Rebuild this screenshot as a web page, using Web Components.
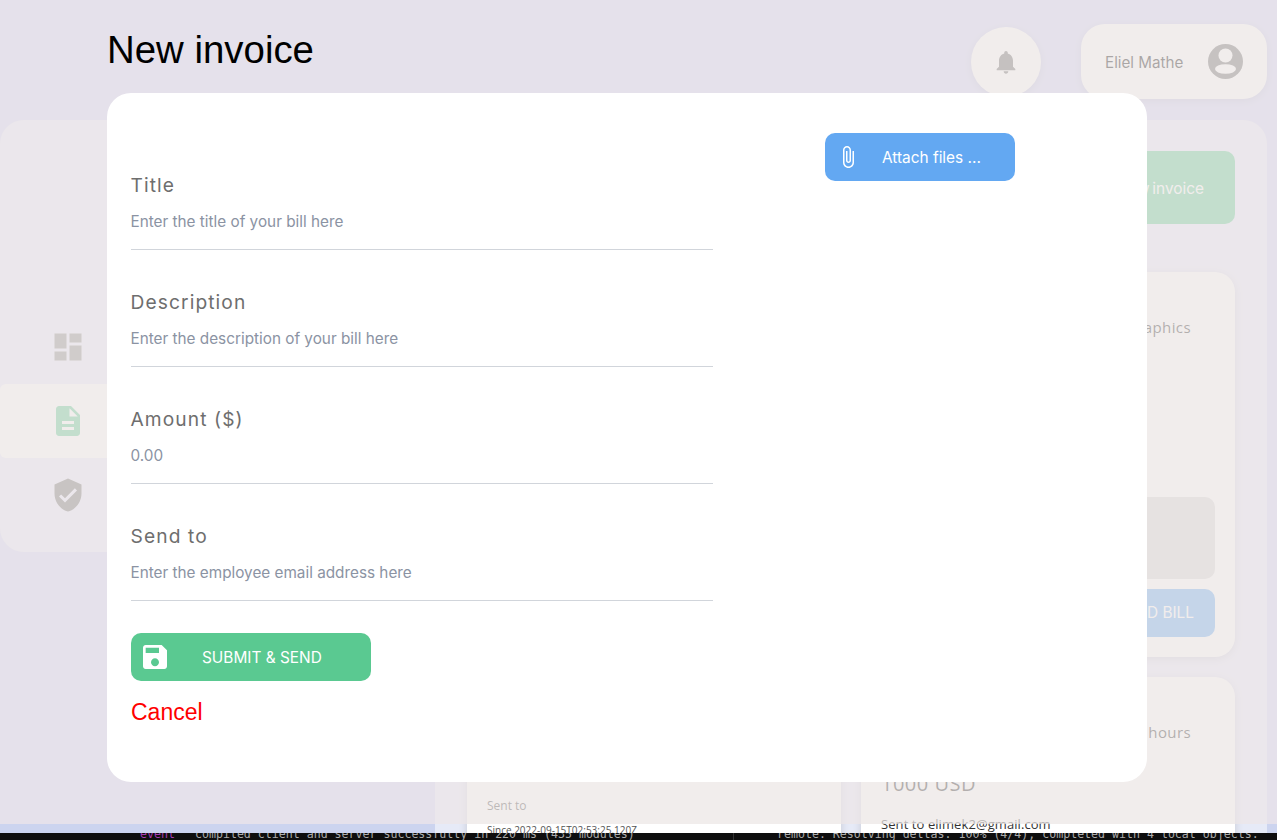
<!DOCTYPE html>
<html><head><meta charset="utf-8"><style>
html,body{margin:0;padding:0;background:#ccd4ef;width:1277px;height:840px;overflow:hidden;font-family:Inter,"Liberation Sans",sans-serif}
</style></head><body>
<app-shell>
  <top-bar slot="top"></top-bar>
  <side-nav slot="side"></side-nav>
  <main-panel slot="main"></main-panel>
  <invoice-dialog slot="dialog"></invoice-dialog>
  <term-strip slot="term"></term-strip>
</app-shell>
<script>
function def(name,html){customElements.define(name,class extends HTMLElement{constructor(){super();this.attachShadow({mode:'open'}).innerHTML=typeof html==='function'?html(this):html;}});}
const icons={
 dash:'M3 13h8V3H3v10zm0 8h8v-6H3v6zm10 0h8V11h-8v10zm0-18v6h8V3h-8z',
 doc:'M14 2H6c-1.1 0-1.99.9-1.99 2L4 20c0 1.1.89 2 1.99 2H18c1.1 0 2-.9 2-2V8l-6-6zm2 16H8v-2h8v2zm0-4H8v-2h8v2zm-3-5V3.5L18.5 9H13z',
 shield:'M12 1L3 5v6c0 5.55 3.84 10.74 9 12 5.16-1.26 9-6.45 9-12V5l-9-4zm-2 16l-4-4 1.41-1.41L10 14.17l6.59-6.59L18 9l-8 8z',
 bell:'M12 22c1.1 0 2-.9 2-2h-4c0 1.1.89 2 2 2zm6-6v-5c0-3.07-1.64-5.64-4.5-6.32V4c0-.83-.67-1.5-1.5-1.5s-1.5.67-1.5 1.5v.68C7.63 5.36 6 7.92 6 11v5l-2 2v1h16v-1l-2-2z',
 save:'M17 3H5c-1.11 0-2 .9-2 2v14c0 1.1.89 2 2 2h14c1.1 0 2-.9 2-2V7l-4-4zm-5 16c-1.66 0-3-1.34-3-3s1.34-3 3-3 3 1.34 3 3-1.34 3-3 3zm3-10H5V5h10v4z',
 clip:'M16.5 6v11.5c0 2.21-1.79 4-4 4s-4-1.79-4-4V5c0-1.38 1.12-2.5 2.5-2.5s2.5 1.12 2.5 2.5v10.5c0 .55-.45 1-1 1s-1-.45-1-1V6H10v9.5c0 1.38 1.12 2.5 2.5 2.5s2.5-1.12 2.5-2.5V5c0-2.21-1.79-4-4-4S7 2.79 7 5v12.5c0 3.04 2.46 5.5 5.5 5.5s5.5-2.46 5.5-5.5V6h-1.5z'
};
const svg=(k,s,c)=>`<svg width="${s}" height="${s}" viewBox="0 0 24 24" fill="${c}" style="display:block;flex:none"><path d="${icons[k]}"/></svg>`;

def('app-shell',`<style>
:host{display:flex;flex-direction:column;width:1277px;height:840px;overflow:hidden;position:relative}
.page{height:833px;position:relative;overflow:hidden;flex:none}
.body{height:824px;display:flex;flex-direction:column;background:#d4d5fa;padding:24px 10px 0 0;box-sizing:border-box}
.cols{display:flex;margin-top:21px;align-items:flex-start;flex:none}
.veil{position:absolute;left:0;top:0;width:1277px;height:824px;background:rgba(235,230,229,.72)}
.over{position:absolute;left:0;top:0;width:1277px;height:824px}
</style>
<div class="page"><div class="body"><slot name="top"></slot><div class="cols"><slot name="side"></slot><slot name="main"></slot></div></div>
<div class="veil"></div><div class="over"><slot name="dialog"></slot></div></div>
<slot name="term"></slot>`);

def('top-bar',`<style>
:host{display:flex;justify-content:flex-end;align-items:center;gap:40px;height:75px;flex:none}
.bell{width:70px;height:70px;border-radius:50%;background:#fff;display:flex;align-items:center;justify-content:center;box-shadow:0 2px 8px rgba(0,0,0,.12)}
.user{width:186px;height:75px;box-sizing:border-box;border-radius:24px;background:#fff;display:flex;align-items:center;justify-content:space-between;padding:0 24px;box-shadow:0 2px 8px rgba(0,0,0,.12);font:15.2px/22px Inter,sans-serif;color:#000}
.user span{padding-top:2px}
</style>
<div class="bell">${svg('bell',28,'#606060')}</div>
<div class="user"><span>Eliel Mathe</span>
<svg width="35" height="35" viewBox="0 0 35 35" style="display:block;flex:none"><circle cx="17.5" cy="17.5" r="17.5" fill="#666"/><circle cx="17.5" cy="11.5" r="7" fill="#fff"/><ellipse cx="17.5" cy="25" rx="10.5" ry="4.8" fill="#fff"/></svg></div>`);

def('nav-item',h=>`<style>
:host{display:block;height:74px}
.r{height:74px;display:flex;align-items:center;padding-left:50px;box-sizing:border-box;${h.hasAttribute('active')?'background:#fff;border-radius:6px 0 0 6px':''}}
</style><div class="r">${svg(h.getAttribute('icon'),36,h.getAttribute('tint'))}</div>`);

def('side-nav',`<style>
:host{display:block;width:435px;flex:none}
.s{width:300px;height:432px;box-sizing:border-box;padding-top:190px;background:rgba(255,255,255,.5);border-radius:24px;overflow:hidden}
</style><div class="s">
<nav-item icon="dash" tint="#888"></nav-item>
<nav-item icon="doc" tint="#5ac991" active></nav-item>
<nav-item icon="shield" tint="#6c6c6c"></nav-item></div>`);

def('bill-card',h=>`<style>
:host{display:block;box-sizing:border-box;background:#fff;border-radius:20px;box-shadow:0 2px 8px rgba(0,0,0,.14);height:385px}
</style><slot></slot>`);

def('main-panel',`<style>
:host{display:block;width:832px;height:720px;box-sizing:border-box;background:rgba(255,255,255,.5);border-radius:24px 24px 0 0;padding:31px 32px 0}
.top{display:flex;justify-content:flex-end}
.new{width:240px;height:73px;border-radius:10px;background:#5ac991;color:#fff;font:15.4px/75px Inter,sans-serif;word-spacing:-1.5px;text-align:right;box-sizing:border-box;padding-right:31px}
.grid{margin-top:48px;display:grid;grid-template-columns:374px 374px;gap:20px}
.c{display:flex;flex-direction:column;padding:0 20px;box-sizing:border-box;height:100%}
.t{font:400 15px/20px "Open Sans",sans-serif;letter-spacing:.4px;color:#222;text-align:right;padding-right:24px;white-space:nowrap}
.box{height:82px;background:#d6d6d8;border-radius:10px}
.up{height:48px;background:#63a8f2;border-radius:10px;margin-top:10px;color:#fff;font:15.4px/48px Inter,sans-serif;text-align:right;padding-right:21px}
.sm{font:12px/16px "Open Sans",sans-serif;color:#444}
.sm2{font:10px/14px "Open Sans",sans-serif;color:#555;white-space:nowrap}
.sm3{font:13px/16px "Open Sans",sans-serif;color:#333;letter-spacing:.08px;white-space:nowrap}
.amt{font:20px/24px "Open Sans",sans-serif;color:#222;letter-spacing:.5px}
</style>
<div class="top"><div class="new">New invoice</div></div>
<div class="grid">
<bill-card><div class="c"><div class="t" style="margin-top:45px">Invoice for logo graphics</div><div style="flex:1"></div><div class="box"></div><div class="up" style="margin-bottom:20px">UPLOAD BILL</div></div></bill-card>
<bill-card><div class="c"><div class="t" style="margin-top:45px">Invoice for logo graphics</div><div style="flex:1"></div><div class="box"></div><div class="up" style="margin-bottom:20px">UPLOAD BILL</div></div></bill-card>
<bill-card><div class="c"><div class="sm" style="margin-top:121px">Sent to</div><div class="sm2" style="margin-top:9px">Since 2022-09-15T02:53:25.120Z</div></div></bill-card>
<bill-card><div class="c"><div class="t" style="margin-top:45px">Invoice for extra hours</div><div class="amt" style="margin-top:30px">1000 USD</div><div class="sm3" style="margin-top:20px">Sent to elimek2@gmail.com</div></div></bill-card>
</div>`);

def('form-field',h=>`<style>
:host{display:block;width:582px}
label{display:block;font:400 19.2px/28px Inter,sans-serif;letter-spacing:1.1px;color:#6e6e6e;padding-top:1px;height:27px;text-indent:-.5px}
.i{margin-top:8px;height:44px;box-sizing:border-box;border-bottom:1px solid #d1d5db;font:15.3px/24px Inter,sans-serif;color:#8b93a3;padding-top:4px;text-indent:-.5px}
</style><label>${h.getAttribute('label')}</label><div class="i">${h.getAttribute('hint')}</div>`);

def('action-button',h=>`<style>
:host{display:block}
.b{display:flex;align-items:center;width:${h.getAttribute('w')}px;height:48px;border-radius:10px;background:${h.getAttribute('bg')};color:#fff;font:400 15.4px/22px Inter,sans-serif;box-sizing:border-box;padding-left:${h.getAttribute('pl')}px}
span{margin-left:${h.getAttribute('gap')}px;white-space:nowrap;padding-top:2px}
</style><div class="b">${svg(h.getAttribute('icon'),h.getAttribute('size'),'#fff')}<span><slot></slot></span></div>`);

def('invoice-dialog',`<style>
:host{display:block;padding:0 0 0 107px}
h1{margin:0;font:400 38.4px/44px "Liberation Sans",sans-serif;color:#000;padding-top:28px;height:93px;box-sizing:border-box}
.m{width:1040px;height:689px;background:#fff;border-radius:24px;box-sizing:border-box;padding:40px 0 0 24px;display:flex}
.l{width:582px;padding-top:37px}
.f{display:flex;flex-direction:column;gap:37px;margin-bottom:32px}
.r{margin-left:112px}
.cancel{font:23px/28px "Liberation Sans",sans-serif;color:#f00;margin-top:17px}
</style>
<h1>New invoice</h1>
<div class="m"><div class="l"><div class="f">
<form-field label="Title" hint="Enter the title of your bill here"></form-field>
<form-field label="Description" hint="Enter the description of your bill here"></form-field>
<form-field label="Amount ($)" hint="0.00"></form-field>
<form-field label="Send to" hint="Enter the employee email address here"></form-field></div>
<action-button w="240" bg="#5ac991" pl="8" icon="save" size="32" gap="31">SUBMIT &amp; SEND</action-button>
<div class="cancel">Cancel</div>
</div><div class="r"><action-button w="190" bg="#63a8f2" pl="11" icon="clip" size="24" gap="22">Attach files ...</action-button></div></div>`);

def('term-strip',`<style>
:host{display:block;height:7px;flex:none;background:#0e0e0e;overflow:hidden;font:11.6px/12px "DejaVu Sans Mono",monospace;color:#aaa;white-space:nowrap}
.row{display:flex;margin-top:-5px;padding-left:140px}
.e{color:#a33bb0;width:55px}
.a{width:538px}
.d{width:1px;height:12px;background:#333;margin-right:43px}
</style><div class="row"><span class="e">event</span><span class="a">compiled client and server successfully in 220 ms (435 modules)</span><span class="d"></span><span>remote: Resolving deltas: 100% (4/4), completed with 4 local objects.</span></div>`);
</script></body></html>
